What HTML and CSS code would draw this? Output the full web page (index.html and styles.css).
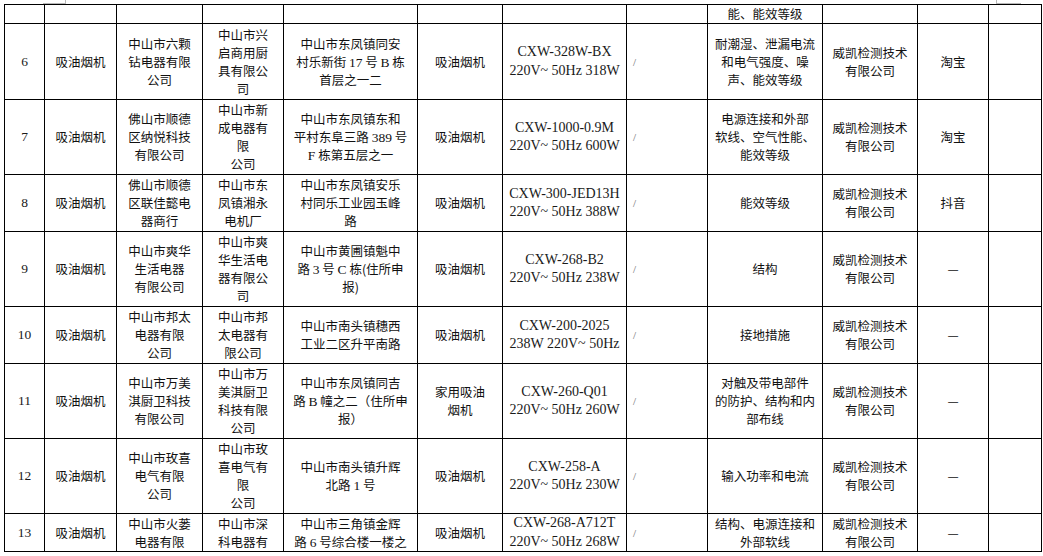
FILE: index.html
```html
<!DOCTYPE html>
<html lang="zh-CN">
<head>
<meta charset="utf-8">
<title>吸油烟机</title>
<link rel="stylesheet" href="styles.css">
</head>
<body>
<div class="page">
  <div class="mark mark-left"></div>
  <div class="mark mark-right"></div>
  <table class="grid">
    <colgroup>
      <col class="c1"><col class="c2"><col class="c3"><col class="c4"><col class="c5"><col class="c6">
      <col class="c7"><col class="c8"><col class="c9"><col class="c10"><col class="c11"><col class="c12">
    </colgroup>
    <tr class="r19">
      <td></td><td></td><td></td><td></td><td></td><td></td><td></td><td></td>
      <td>能、能效等级</td><td></td><td></td><td></td>
    </tr>
    <tr class="r76">
      <td class="num">6</td>
      <td>吸油烟机</td>
      <td>中山市六颗<br>钻电器有限<br>公司</td>
      <td>中山市兴<br>启商用厨<br>具有限公<br>司</td>
      <td>中山市东凤镇同安<br>村乐新街 <span class="en">17</span> 号 <span class="en">B</span> 栋<br>首层之一二</td>
      <td>吸油烟机</td>
      <td class="model">CXW-328W-BX<br>220V~ 50Hz 318W</td>
      <td class="slash">/</td>
      <td>耐潮湿、泄漏电流<br>和电气强度、噪<br>声、能效等级</td>
      <td>威凯检测技术<br>有限公司</td>
      <td>淘宝</td>
      <td></td>
    </tr>
    <tr class="r75">
      <td class="num">7</td>
      <td>吸油烟机</td>
      <td>佛山市顺德<br>区纳悦科技<br>有限公司</td>
      <td>中山市新<br>成电器有<br>限<br>公司</td>
      <td>中山市东凤镇东和<br>平村东阜三路 <span class="en">389</span> 号<br><span class="en">F</span> 栋第五层之一</td>
      <td>吸油烟机</td>
      <td class="model">CXW-1000-0.9M<br>220V~ 50Hz 600W</td>
      <td class="slash">/</td>
      <td>电源连接和外部<br>软线、空气性能、<br>能效等级</td>
      <td>威凯检测技术<br>有限公司</td>
      <td>淘宝</td>
      <td></td>
    </tr>
    <tr class="r57">
      <td class="num">8</td>
      <td>吸油烟机</td>
      <td>佛山市顺德<br>区联佳懿电<br>器商行</td>
      <td>中山市东<br>凤镇湘永<br>电机厂</td>
      <td>中山市东凤镇安乐<br>村同乐工业园玉峰<br>路</td>
      <td>吸油烟机</td>
      <td class="model">CXW-300-JED13H<br>220V~ 50Hz 388W</td>
      <td class="slash">/</td>
      <td>能效等级</td>
      <td>威凯检测技术<br>有限公司</td>
      <td>抖音</td>
      <td></td>
    </tr>
    <tr class="r75">
      <td class="num">9</td>
      <td>吸油烟机</td>
      <td>中山市爽华<br>生活电器<br>有限公司</td>
      <td>中山市爽<br>华生活电<br>器有限公<br>司</td>
      <td>中山市黄圃镇魁中<br>路 <span class="en">3</span> 号 <span class="en">C</span> 栋(住所申<br>报)</td>
      <td>吸油烟机</td>
      <td class="model">CXW-268-B2<br>220V~ 50Hz 238W</td>
      <td class="slash">/</td>
      <td>结构</td>
      <td>威凯检测技术<br>有限公司</td>
      <td>—</td>
      <td></td>
    </tr>
    <tr class="r57">
      <td class="num">10</td>
      <td>吸油烟机</td>
      <td>中山市邦太<br>电器有限<br>公司</td>
      <td>中山市邦<br>太电器有<br>限公司</td>
      <td>中山市南头镇穗西<br>工业二区升平南路</td>
      <td>吸油烟机</td>
      <td class="model">CXW-200-2025<br>238W 220V~ 50Hz</td>
      <td class="slash">/</td>
      <td>接地措施</td>
      <td>威凯检测技术<br>有限公司</td>
      <td>—</td>
      <td></td>
    </tr>
    <tr class="r75">
      <td class="num">11</td>
      <td>吸油烟机</td>
      <td>中山市万美<br>淇厨卫科技<br>有限公司</td>
      <td>中山市万<br>美淇厨卫<br>科技有限<br>公司</td>
      <td>中山市东凤镇同吉<br>路 <span class="en">B</span> 幢之二（住所申<br>报）</td>
      <td>家用吸油<br>烟机</td>
      <td class="model">CXW-260-Q01<br>220V~ 50Hz 260W</td>
      <td class="slash">/</td>
      <td>对触及带电部件<br>的防护、结构和内<br>部布线</td>
      <td>威凯检测技术<br>有限公司</td>
      <td>—</td>
      <td></td>
    </tr>
    <tr class="r75">
      <td class="num">12</td>
      <td>吸油烟机</td>
      <td>中山市玫喜<br>电气有限<br>公司</td>
      <td>中山市玫<br>喜电气有<br>限<br>公司</td>
      <td>中山市南头镇升辉<br>北路 <span class="en">1</span> 号</td>
      <td>吸油烟机</td>
      <td class="model">CXW-258-A<br>220V~ 50Hz 230W</td>
      <td class="slash">/</td>
      <td>输入功率和电流</td>
      <td>威凯检测技术<br>有限公司</td>
      <td>—</td>
      <td></td>
    </tr>
    <tr class="r37">
      <td class="num">13</td>
      <td>吸油烟机</td>
      <td>中山市火蒌<br>电器有限</td>
      <td>中山市深<br>科电器有</td>
      <td>中山市三角镇金辉<br>路 <span class="en">6</span> 号综合楼一楼之</td>
      <td>吸油烟机</td>
      <td class="model">CXW-268-A712T<br>220V~ 50Hz 268W</td>
      <td class="slash">/</td>
      <td>结构、电源连接和<br>外部软线</td>
      <td>威凯检测技术<br>有限公司</td>
      <td>—</td>
      <td></td>
    </tr>
  </table>
</div>
</body>
</html>
```

FILE: styles.css
```css
html, body {
  margin: 0;
  padding: 0;
  background: #ffffff;
}

.page {
  position: relative;
  width: 1043px;
  height: 556px;
  overflow: hidden;
  padding: 4px 0 0 4px;
  box-sizing: border-box;
}

.mark {
  position: absolute;
  top: 0;
  height: 3px;
  border-bottom: 1px solid #b8b8b8;
}

.mark-left {
  left: 43px;
  width: 22px;
  border-right: 1px solid #b8b8b8;
}

.mark-right {
  left: 996px;
  width: 24px;
  border-left: 1px solid #b8b8b8;
}

.grid {
  border-collapse: collapse;
  table-layout: fixed;
  width: 1038px;
  font-family: "Noto Sans CJK SC", "Noto Sans", sans-serif;
  font-size: 12.5px;
  line-height: 18px;
  color: #111;
}

.grid td {
  border: 1px solid #000;
  padding: 0;
  text-align: center;
  vertical-align: middle;
  white-space: nowrap;
  overflow: hidden;
}

.c1 { width: 40px; }
.c2 { width: 72px; }
.c3 { width: 86px; }
.c4 { width: 81px; }
.c5 { width: 134px; }
.c6 { width: 85px; }
.c7 { width: 124px; }
.c8 { width: 81px; }
.c9 { width: 115px; }
.c10 { width: 95px; }
.c11 { width: 71px; }
.c12 { width: 53px; }

.r19 { height: 19px; }
.r37 { height: 37px; }
.r57 { height: 57px; }
.r75 { height: 75px; }
.r76 { height: 76px; }

.num {
  font-family: "Liberation Serif", serif;
  font-size: 13.5px;
  color: #1a1a1a;
}

.en {
  font-family: "Liberation Serif", serif;
  font-size: 13.5px;
  line-height: 0;
}

.model {
  font-family: "Liberation Serif", serif;
  font-size: 14px;
  line-height: 18.5px;
  color: #1a1a1a;
}

.grid td.slash {
  text-align: left;
  padding-left: 6px;
  font-family: "Liberation Serif", serif;
  font-size: 11px;
  color: #666;
}
```
